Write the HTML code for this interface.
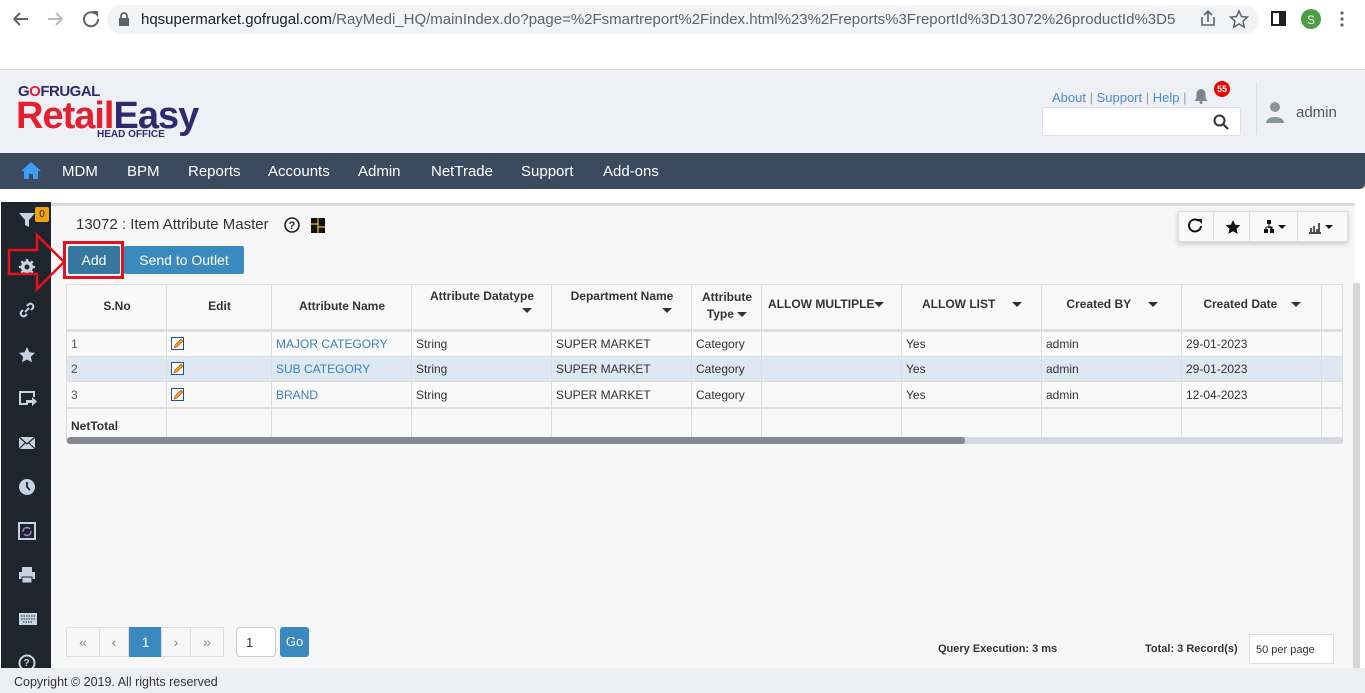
<!DOCTYPE html>
<html><head><meta charset="utf-8"><style>
*{box-sizing:border-box;margin:0;padding:0}
body{width:1365px;height:693px;overflow:hidden;background:#fff;font-family:"Liberation Sans",sans-serif;position:relative;font-size:13px;color:#333}
.a{position:absolute}
.chrome{left:0;top:0;width:1365px;height:70px;background:#fff;border-bottom:1px solid #dcdcdc}
.url{left:107px;top:5px;width:1152px;height:29px;border-radius:15px;background:#f1f3f4;font-size:15px;color:#202124;line-height:29px;padding-left:34px}
.url span{color:#5f6368}
.hdr{left:0;top:70px;width:1365px;height:83px;background:#eff0f5}
.nav{left:0;top:153px;width:1365px;height:36px;background:#3c4a60;border-radius:0 0 5px 0}
.nav span{position:absolute;top:10px;color:#fff;font-size:15px}
.side{left:1px;top:202px;width:50px;height:466px;background:#1e252d}
.side svg{position:absolute;left:17px}
.panel{left:51px;top:203px;width:1304px;height:465px;background:#f7f7f7;border-top:3px solid #d6dae0}
.foot{left:0;top:668px;width:1365px;height:25px;background:#eeeff3;font-size:12.5px;color:#333;padding:7px 0 0 14px}
.cell{position:absolute;border-right:1px solid #ddd;font-size:12px;padding:0 4px}
.th{font-weight:bold;color:#333;text-align:center}
.lnk{color:#3a7fbd}
.btn{position:absolute;background:#3b8abf;color:#fff;font-size:14px;text-align:center;border-radius:2px}
.pg{position:absolute;top:627px;height:30px;border:1px solid #ddd;background:#f7f7f7;color:#888;text-align:center;line-height:28px;font-size:14px}
.tri{display:inline-block;width:0;height:0;border-left:5px solid transparent;border-right:5px solid transparent;border-top:5px solid #333;vertical-align:middle}
</style></head><body>
<div class="a chrome"></div>
<svg class="a" style="left:12px;top:10px" width="90" height="20"><path d="M2 9h14M2 9l6-6M2 9l6 6" stroke="#5f6368" stroke-width="2" fill="none"/><path d="M36 9h14M50 9l-6-6M50 9l-6 6" stroke="#bbb" stroke-width="2" fill="none"/><path d="M86 9a7 7 0 1 1-3-5.5" stroke="#5f6368" stroke-width="2" fill="none"/><path d="M80 1h6v6z" fill="#5f6368"/></svg>
<div class="a url">hqsupermarket.gofrugal.com<span>/RayMedi_HQ/mainIndex.do?page=%2Fsmartreport%2Findex.html%23%2Freports%3FreportId%3D13072%26productId%3D5</span></div>
<svg class="a" style="left:118px;top:12px" width="12" height="14"><rect x="1" y="6" width="10" height="8" fill="#5f6368"/><path d="M3 6V4a3 3 0 0 1 6 0v2" stroke="#5f6368" stroke-width="1.8" fill="none"/></svg>
<svg class="a" style="left:1198px;top:9px" width="160" height="20"><path d="M4 8v8h12V8M10 13V3M6 6l4-4 4 4" stroke="#5f6368" stroke-width="1.6" fill="none"/><path d="M41 2l2.5 5.5 6 .6-4.5 4 1.3 6-5.3-3.1-5.3 3.1 1.3-6-4.5-4 6-.6z" stroke="#5f6368" stroke-width="1.5" fill="none"/><rect x="74" y="3" width="13" height="13" stroke="#202124" stroke-width="2" fill="none"/><rect x="81" y="3" width="6" height="13" fill="#202124"/><circle cx="113" cy="10" r="10" fill="#4a9e46"/><text x="109" y="15" fill="#fff" font-size="12" font-family="Liberation Sans">S</text><circle cx="144" cy="4" r="1.6" fill="#5f6368"/><circle cx="144" cy="10" r="1.6" fill="#5f6368"/><circle cx="144" cy="16" r="1.6" fill="#5f6368"/></svg>

<div class="a hdr"></div>
<div class="a" style="left:18px;top:83px;font-size:15px;font-weight:bold;color:#2e2a6e;letter-spacing:-.5px">G<span style="color:#e5202e">O</span>FRUGAL</div>
<div class="a" style="left:16px;top:96px;font-size:38px;font-weight:bold;letter-spacing:-1px;line-height:40px"><span style="color:#e5202e">Retail</span><span style="color:#2e2a6e">Easy</span></div>
<div class="a" style="left:97px;top:129px;font-size:10px;font-weight:bold;color:#2e2a6e">HEAD OFFICE</div>
<div class="a" style="left:1052px;top:90px;font-size:13px;color:#4a8ccf">About <span style="color:#999">|</span> Support <span style="color:#999">|</span> Help <span style="color:#999">|</span></div>
<svg class="a" style="left:1194px;top:88px" width="14" height="16"><path d="M7 1a4.5 4.5 0 0 1 4.5 4.5V10l2 3H.5l2-3V5.5A4.5 4.5 0 0 1 7 1z" fill="#7b8591"/><circle cx="7" cy="14.5" r="1.5" fill="#7b8591"/></svg>
<div class="a" style="left:1214px;top:81px;width:16px;height:16px;border-radius:8px;background:#e00;color:#fff;font-size:9px;text-align:center;line-height:16px;font-weight:bold">55</div>
<div class="a" style="left:1042px;top:107px;width:199px;height:29px;background:#fff;border:1px solid #dde;border-radius:3px"></div>
<svg class="a" style="left:1213px;top:114px" width="16" height="16"><circle cx="6.5" cy="6.5" r="5" stroke="#333" stroke-width="2" fill="none"/><path d="M10 10l5 5" stroke="#333" stroke-width="2.2"/></svg>
<div class="a" style="left:1256px;top:82px;width:1px;height:53px;background:#dcdde3"></div>
<svg class="a" style="left:1265px;top:101px" width="20" height="24"><circle cx="10" cy="6" r="5" fill="#8a939c"/><path d="M1 22c0-8 18-8 18 0z" fill="#8a939c"/></svg>
<div class="a" style="left:1296px;top:104px;font-size:15px;color:#555">admin</div>

<div class="a nav">
<svg style="position:absolute;left:20px;top:8px" width="22" height="19"><path d="M11 1L1 10h3v8h5v-5h4v5h5v-8h3z" fill="#3e9cf2"/></svg>
<span style="left:62px">MDM</span><span style="left:127px">BPM</span><span style="left:188px">Reports</span><span style="left:268px">Accounts</span><span style="left:358px">Admin</span><span style="left:431px">NetTrade</span><span style="left:521px">Support</span><span style="left:603px">Add-ons</span>
</div>

<div class="a side">
<svg style="top:10px" width="18" height="16"><path d="M1 1h16l-6 7v7l-4-2V8z" fill="#c5d3e0"/></svg>
<svg style="top:56px" width="18" height="18"><circle cx="9" cy="9" r="6" fill="#c5d3e0"/><path d="M9 1v16M1 9h16M3.3 3.3l11.4 11.4M14.7 3.3L3.3 14.7" stroke="#c5d3e0" stroke-width="2.5"/><circle cx="9" cy="9" r="2.5" fill="#1e252d"/></svg>
<svg style="top:99px" width="18" height="18"><path d="M7 11l4-4M5 9l-2 2a3 3 0 0 0 4 4l2-2M13 9l2-2a3 3 0 0 0-4-4L9 5" stroke="#c5d3e0" stroke-width="2" fill="none"/></svg>
<svg style="top:144px" width="18" height="18"><path d="M9 1l2.4 5.3 5.6.6-4.2 3.8 1.2 5.6L9 13.5l-5 2.8 1.2-5.6L1 6.9l5.6-.6z" fill="#c5d3e0"/></svg>
<svg style="top:188px" width="20" height="18"><path d="M10 14H2V2h14v5" stroke="#c5d3e0" stroke-width="2" fill="none"/><path d="M8 10h6V7l5 4.5-5 4.5v-3H8z" fill="#c5d3e0"/></svg>
<svg style="top:233px" width="18" height="16"><rect x="1" y="2" width="16" height="12" fill="#c5d3e0"/><path d="M1 2l8 7 8-7M1 14l6-6M17 14l-6-6" stroke="#1e252d" stroke-width="1.2" fill="none"/></svg>
<svg style="top:276px" width="18" height="18"><circle cx="9" cy="9" r="8" fill="#c5d3e0"/><path d="M9 4v5l3 3" stroke="#1e252d" stroke-width="1.8" fill="none"/></svg>
<svg style="top:320px" width="18" height="18"><rect x="1" y="1" width="16" height="16" stroke="#c5d3e0" stroke-width="2" fill="none"/><path d="M5 10a4 4 0 0 1 7-3M13 9a4 4 0 0 1-7 3" stroke="#9b7fd0" stroke-width="1.5" fill="none"/></svg>
<svg style="top:364px" width="18" height="18"><rect x="4" y="1" width="10" height="5" fill="#c5d3e0"/><rect x="1" y="6" width="16" height="7" fill="#c5d3e0"/><rect x="4" y="11" width="10" height="6" fill="#c5d3e0" stroke="#1e252d"/></svg>
<svg style="top:410px" width="20" height="14"><rect x="1" y="1" width="18" height="12" fill="#c5d3e0"/><path d="M3 4h14M3 7h14M5 10h10" stroke="#1e252d" stroke-width="1" stroke-dasharray="1.5 1"/></svg>
<svg style="top:452px" width="18" height="14"><circle cx="9" cy="9" r="7.5" stroke="#c5d3e0" stroke-width="2" fill="none"/><text x="5.5" y="12" font-size="10" fill="#c5d3e0" font-weight="bold" font-family="Liberation Sans">?</text></svg>
</div>
<div class="a" style="left:35px;top:207px;width:14px;height:15px;background:#f0a30a;border-radius:2px;font-size:10px;text-align:center;line-height:15px;color:#222">0</div>

<div class="a panel"></div>
<div class="a" style="left:76px;top:216px;font-size:15px;color:#333">13072 : Item Attribute Master</div>
<svg class="a" style="left:284px;top:216px" width="42" height="18"><circle cx="8" cy="9" r="7" stroke="#222" stroke-width="1.6" fill="none"/><text x="4.5" y="13" font-size="11" font-weight="bold" fill="#222" font-family="Liberation Sans">?</text><rect x="27" y="2" width="14" height="15" fill="#111"/><path d="M34 2v15M27 8h7M34 11h7" stroke="#f0c030" stroke-width="1.2"/></svg>

<div class="btn" style="left:68px;top:246px;width:52px;height:28px;line-height:28px;background:#35779f">Add</div>
<div class="btn" style="left:124px;top:246px;width:120px;height:28px;line-height:28px">Send to Outlet</div>
<div class="a" style="left:63px;top:241px;width:61px;height:38px;border:3px solid #e8101c"></div>
<svg class="a" style="left:5px;top:232px" width="62" height="60"><path d="M4 18h28V3l27 27-27 27V42H4z" fill="none" stroke="#e8101c" stroke-width="2.5"/></svg>

<div class="a" style="left:1178px;top:211px;width:170px;height:31px;background:#f9f9f9;border:1px solid #ddd;box-shadow:0 2px 5px rgba(0,0,0,.2)">
<div class="a" style="left:34px;top:0;width:1px;height:29px;background:#ddd"></div>
<div class="a" style="left:70px;top:0;width:1px;height:29px;background:#ddd"></div>
<div class="a" style="left:118px;top:0;width:1px;height:29px;background:#ddd"></div>
<svg class="a" style="left:9px;top:6px" width="160" height="18"><path d="M13 8a6 6 0 1 1-2-5" stroke="#111" stroke-width="2" fill="none"/><path d="M9 1h5v5z" fill="#111"/><path d="M45 2l2.2 4.8 5.2.5-3.9 3.5 1.1 5.1L45 13.3l-4.6 2.6 1.1-5.1-3.9-3.5 5.2-.5z" fill="#111"/><rect x="79" y="2" width="4" height="4" fill="#111"/><rect x="76" y="11" width="4" height="4" fill="#111"/><rect x="82" y="11" width="4" height="4" fill="#111"/><path d="M81 6v3M78 9h6v2M78 9v2" stroke="#111" stroke-width="1"/><path d="M90 7h8l-4 4z" fill="#111"/><path d="M121 15h12M123 10v4M126 8v6M129 11v3M131 5v9" stroke="#111" stroke-width="1.4"/><path d="M137 7h8l-4 4z" fill="#111"/></svg>
</div>

<div class="a" style="left:66px;top:284px;width:1277px;height:159px;border:1px solid #ddd;background:#f9f9f9"></div>
<div class="a" style="left:67px;top:356px;width:1275px;height:26px;background:#dde8f3"></div>
<div class="a" style="left:67px;top:329px;width:1275px;height:3px;background:#ddd"></div>
<div class="a" style="left:67px;top:356px;width:1275px;height:1px;background:#ddd"></div>
<div class="a" style="left:67px;top:381px;width:1275px;height:1px;background:#ddd"></div>
<div class="a" style="left:67px;top:407px;width:1275px;height:2px;background:#ddd"></div>
<div class="a" style="left:67px;top:285px;width:1275px;height:152px">
<div class="cell" style="left:0;width:100px;height:152px"></div>
<div class="cell" style="left:100px;width:105px;height:152px"></div>
<div class="cell" style="left:205px;width:140px;height:152px"></div>
<div class="cell" style="left:345px;width:140px;height:152px"></div>
<div class="cell" style="left:485px;width:140px;height:152px"></div>
<div class="cell" style="left:625px;width:70px;height:152px"></div>
<div class="cell" style="left:695px;width:140px;height:152px"></div>
<div class="cell" style="left:835px;width:140px;height:152px"></div>
<div class="cell" style="left:975px;width:140px;height:152px"></div>
<div class="cell" style="left:1115px;width:140px;height:152px"></div>
</div>
<div class="a th" style="left:67px;top:299px;width:100px;font-size:12px">S.No</div>
<div class="a th" style="left:167px;top:299px;width:105px;font-size:12px">Edit</div>
<div class="a th" style="left:272px;top:299px;width:140px;font-size:12px">Attribute Name</div>
<div class="a th" style="left:412px;top:289px;width:140px;font-size:12px">Attribute Datatype<br><span class="tri" style="margin-left:90px"></span></div>
<div class="a th" style="left:552px;top:289px;width:140px;font-size:12px">Department Name<br><span class="tri" style="margin-left:90px"></span></div>
<div class="a th" style="left:692px;top:289px;width:70px;font-size:12px;line-height:17px">Attribute<br>Type <span class="tri"></span></div>
<div class="a th" style="left:762px;top:297px;width:140px;font-size:12px;text-align:left;padding-left:6px">ALLOW MULTIPLE<span class="tri"></span></div>
<div class="a th" style="left:902px;top:297px;width:140px;font-size:12px">ALLOW LIST &nbsp; &nbsp; <span class="tri"></span></div>
<div class="a th" style="left:1042px;top:297px;width:140px;font-size:12px">Created BY &nbsp; &nbsp; <span class="tri"></span></div>
<div class="a th" style="left:1182px;top:297px;width:140px;font-size:12px">Created Date &nbsp; &nbsp;<span class="tri"></span></div>

<div class="a" style="left:71px;top:336px;font-size:12px;line-height:16px;color:#555">1</div>
<div class="a" style="left:71px;top:361px;font-size:12px;line-height:16px;color:#555">2</div>
<div class="a" style="left:71px;top:387px;font-size:12px;line-height:16px;color:#555">3</div>
<svg class="a" style="left:171px;top:337px" width="13" height="13"><rect x=".5" y=".5" width="12" height="12" fill="#fff" stroke="#1f4e9c"/><path d="M3 11l1-3 6-6 2 2-6 6z" fill="#f0a020" stroke="#c04000" stroke-width=".6"/></svg>
<svg class="a" style="left:171px;top:362px" width="13" height="13"><rect x=".5" y=".5" width="12" height="12" fill="#fff" stroke="#1f4e9c"/><path d="M3 11l1-3 6-6 2 2-6 6z" fill="#f0a020" stroke="#c04000" stroke-width=".6"/></svg>
<svg class="a" style="left:171px;top:388px" width="13" height="13"><rect x=".5" y=".5" width="12" height="12" fill="#fff" stroke="#1f4e9c"/><path d="M3 11l1-3 6-6 2 2-6 6z" fill="#f0a020" stroke="#c04000" stroke-width=".6"/></svg>
<div class="a lnk" style="left:276px;top:337px;font-size:12px">MAJOR CATEGORY</div>
<div class="a lnk" style="left:276px;top:362px;font-size:12px">SUB CATEGORY</div>
<div class="a lnk" style="left:276px;top:388px;font-size:12px">BRAND</div>
<div class="a" style="left:416px;top:336px;font-size:12px;line-height:16px">String</div>
<div class="a" style="left:416px;top:361px;font-size:12px;line-height:16px">String</div>
<div class="a" style="left:416px;top:387px;font-size:12px;line-height:16px">String</div>
<div class="a" style="left:556px;top:336px;font-size:12px;line-height:16px">SUPER MARKET</div>
<div class="a" style="left:556px;top:361px;font-size:12px;line-height:16px">SUPER MARKET</div>
<div class="a" style="left:556px;top:387px;font-size:12px;line-height:16px">SUPER MARKET</div>
<div class="a" style="left:696px;top:336px;font-size:12px;line-height:16px">Category</div>
<div class="a" style="left:696px;top:361px;font-size:12px;line-height:16px">Category</div>
<div class="a" style="left:696px;top:387px;font-size:12px;line-height:16px">Category</div>
<div class="a" style="left:906px;top:336px;font-size:12px;line-height:16px">Yes</div>
<div class="a" style="left:906px;top:361px;font-size:12px;line-height:16px">Yes</div>
<div class="a" style="left:906px;top:387px;font-size:12px;line-height:16px">Yes</div>
<div class="a" style="left:1046px;top:336px;font-size:12px;line-height:16px">admin</div>
<div class="a" style="left:1046px;top:361px;font-size:12px;line-height:16px">admin</div>
<div class="a" style="left:1046px;top:387px;font-size:12px;line-height:16px">admin</div>
<div class="a" style="left:1186px;top:336px;font-size:12px;line-height:16px">29-01-2023</div>
<div class="a" style="left:1186px;top:361px;font-size:12px;line-height:16px">29-01-2023</div>
<div class="a" style="left:1186px;top:387px;font-size:12px;line-height:16px">12-04-2023</div>
<div class="a" style="left:71px;top:419px;font-size:12px;font-weight:bold">NetTotal</div>
<div class="a" style="left:67px;top:437px;width:1276px;height:7px;background:#d5d8dc;border-radius:3px"></div>
<div class="a" style="left:67px;top:437px;width:898px;height:7px;background:#85898d;border-radius:3px"></div>
<div class="a" style="left:1353px;top:283px;width:7px;height:385px;background:#d6d6d6"></div>

<div class="pg" style="left:66px;width:34px">«</div>
<div class="pg" style="left:99px;width:30px">‹</div>
<div class="pg" style="left:129px;width:33px;background:#3b8abf;border-color:#3b8abf;color:#fff">1</div>
<div class="pg" style="left:161px;width:30px">›</div>
<div class="pg" style="left:190px;width:34px">»</div>
<div class="a" style="left:236px;top:627px;width:40px;height:30px;border:1px solid #ccc;border-radius:4px;background:#fff;font-size:13px;padding:7px 0 0 9px">1</div>
<div class="btn" style="left:280px;top:627px;width:29px;height:30px;line-height:30px;font-size:13px;border-radius:3px">Go</div>
<div class="a" style="left:938px;top:643px;font-size:11px;font-weight:bold">Query Execution: 3 ms</div>
<div class="a" style="left:1145px;top:643px;font-size:11px;font-weight:bold">Total: 3 Record(s)</div>
<div class="a" style="left:1249px;top:634px;width:85px;height:30px;border:1px solid #ddd;background:#fff;font-size:11px;padding:9px 0 0 6px">50 per page</div>

<div class="a foot">Copyright © 2019. All rights reserved</div>
</body></html>
